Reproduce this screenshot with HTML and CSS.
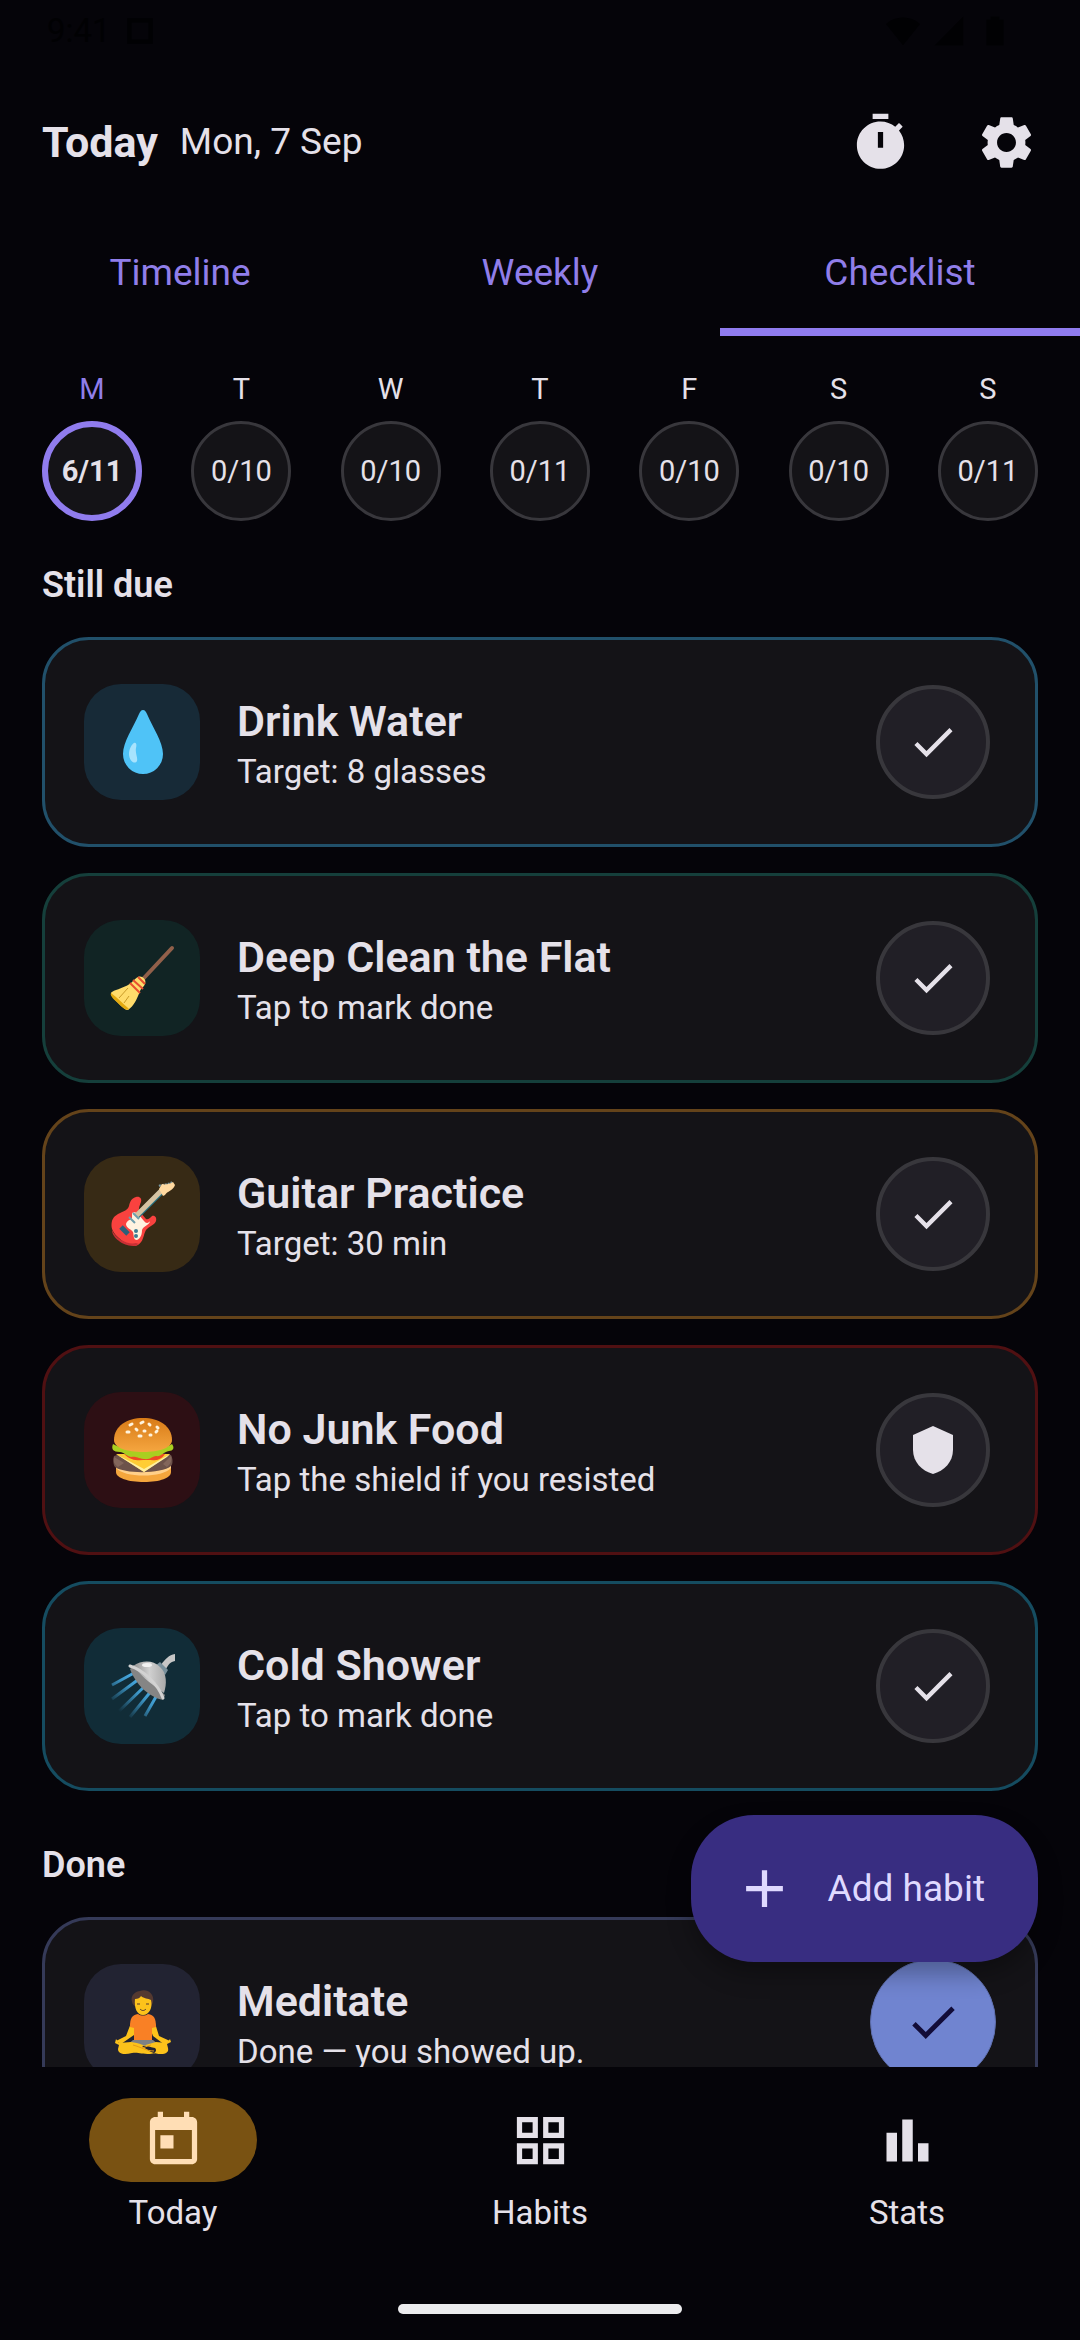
FILE: index.html
```html
<!DOCTYPE html>
<html lang="en">
<head>
    <meta charset="UTF-8">
    <meta name="viewport" content="width=device-width, initial-scale=1">
    <title>Today</title>
    <link rel="stylesheet" href="styles.css">
</head>
<body>
    <!-- Shared icons -->
    <svg class="sprite" aria-hidden="true">
        <symbol id="icon-check" viewBox="0 0 24 24">
            <path d="M9 16.17L4.83 12l-1.42 1.41L9 19 21 7l-1.41-1.41z"/>
        </symbol>
    </svg>

    <div class="status-bar" aria-hidden="true">
        <span class="status-time">9:41</span>
        <svg class="status-icon" viewBox="0 0 24 24"><path d="M3 3h18v18H3zM6 6v12h12V6z" fill-rule="evenodd"/></svg>
        <svg class="status-icon status-wifi" viewBox="0 0 24 24"><path d="M0 7c7-6 17-6 24 0L12 22z"/></svg>
        <svg class="status-icon" viewBox="0 0 24 24"><path d="M2 22h20V2z"/></svg>
        <svg class="status-icon" viewBox="0 0 24 24"><path d="M9 2h6v2h3v18H6V4h3z"/></svg>
    </div>

    <header class="top-bar">
        <h1 class="top-title">Today</h1>
        <span class="top-date">Mon, 7 Sep</span>
        <button class="icon-btn" type="button" aria-label="Timer">
            <svg viewBox="0 0 24 24"><path d="M9 1h6v2H9zM19.03 7.39l1.42-1.42c-.43-.51-.9-.99-1.41-1.41l-1.42 1.42C16.07 4.74 14.12 4 12 4c-4.97 0-9 4.03-9 9s4.02 9 9 9 9-4.03 9-9c0-2.12-.74-4.07-1.97-5.61zM13 14h-2V8h2v6z"/></svg>
        </button>
        <button class="icon-btn" type="button" aria-label="Settings">
            <svg viewBox="0 0 24 24"><path d="M19.14 12.94c.04-.3.06-.61.06-.94 0-.32-.02-.64-.07-.94l2.03-1.58c.18-.14.23-.41.12-.61l-1.92-3.32c-.12-.22-.37-.29-.59-.22l-2.39.96c-.5-.38-1.03-.7-1.62-.94l-.36-2.54c-.04-.24-.24-.41-.48-.41h-3.84c-.24 0-.43.17-.47.41l-.36 2.54c-.59.24-1.13.57-1.62.94l-2.39-.96c-.22-.08-.47 0-.59.22L2.74 8.87c-.12.21-.08.47.12.61l2.03 1.58c-.05.3-.09.63-.09.94s.02.64.07.94l-2.03 1.58c-.18.14-.23.41-.12.61l1.92 3.32c.12.22.37.29.59.22l2.39-.96c.5.38 1.03.7 1.62.94l.36 2.54c.05.24.24.41.48.41h3.84c.24 0 .44-.17.47-.41l.36-2.54c.59-.24 1.13-.56 1.62-.94l2.39.96c.22.08.47 0 .59-.22l1.92-3.32c.12-.22.07-.47-.12-.61l-2.01-1.58zM12 15.6c-1.98 0-3.6-1.62-3.6-3.6s1.62-3.6 3.6-3.6 3.6 1.62 3.6 3.6-1.62 3.6-3.6 3.6z"/></svg>
        </button>
    </header>

    <nav class="tabs" aria-label="Views">
        <a class="tab" href="#timeline">Timeline</a>
        <a class="tab" href="#weekly">Weekly</a>
        <a class="tab active" href="#checklist" aria-current="page">Checklist</a>
    </nav>

    <main class="content">
        <div class="week">
            <button class="day selected" type="button"><span class="day-name">M</span><span class="day-count">6/11</span></button>
            <button class="day" type="button"><span class="day-name">T</span><span class="day-count">0/10</span></button>
            <button class="day" type="button"><span class="day-name">W</span><span class="day-count">0/10</span></button>
            <button class="day" type="button"><span class="day-name">T</span><span class="day-count">0/11</span></button>
            <button class="day" type="button"><span class="day-name">F</span><span class="day-count">0/10</span></button>
            <button class="day" type="button"><span class="day-name">S</span><span class="day-count">0/10</span></button>
            <button class="day" type="button"><span class="day-name">S</span><span class="day-count">0/11</span></button>
        </div>

        <section class="group">
            <h2 class="group-title">Still due</h2>

            <article class="habit water">
                <div class="habit-icon">
                    <svg viewBox="0 0 64 64" aria-hidden="true">
                        <path fill="#4fc3f7" d="M33 0c2 0 3 2 4 4 6 14 16 28 16 40a20 20 0 0 1-40 0c0-12 10-26 16-40 1-2 2-4 4-4z"/>
                        <path fill="#a8e3fd" d="M24 33c2-1 3 1 2 5-1 5 2 10 1 13-2 4-8 0-8-7 0-5 3-10 5-11z"/>
                    </svg>
                </div>
                <div class="habit-text">
                    <h3>Drink Water</h3>
                    <p>Target: 8 glasses</p>
                </div>
                <button class="mark" type="button" aria-label="Mark Drink Water done"><svg><use href="#icon-check"/></svg></button>
            </article>

            <article class="habit clean">
                <div class="habit-icon">
                    <svg viewBox="0 0 64 64" aria-hidden="true">
                        <path stroke="#91604a" stroke-width="4" stroke-linecap="round" d="M33 33L62 2"/>
                        <path fill="#ffdc6b" d="M28 31c4-2 9 3 7 7-1 3-4 4-5 7-3 8-6 15-12 19C15 65 0 50 1 47c1-3 16-5 22-12 2-2 3-3 5-4z"/>
                        <path fill="#e2a90f" d="M1 47c4 3 15 13 18 16-2 2-5 0-9-4S-1 50 1 47z"/>
                        <path fill="none" stroke="#c99b28" d="M9 52l9-10M14 57l5-7"/>
                        <path fill="none" stroke="#e8502f" stroke-width="2" d="M20 37l10 10M23 34l10 9M28 31l7 7"/>
                    </svg>
                </div>
                <div class="habit-text">
                    <h3>Deep Clean the Flat</h3>
                    <p>Tap to mark done</p>
                </div>
                <button class="mark" type="button" aria-label="Mark Deep Clean the Flat done"><svg><use href="#icon-check"/></svg></button>
            </article>

            <article class="habit guitar">
                <div class="habit-icon">
                    <svg viewBox="0 0 64 64" aria-hidden="true">
                        <path fill="none" stroke="#7b9aa3" stroke-width="2" stroke-dasharray="2 1" d="M49 4c4-2 9-1 13-4"/>
                        <path fill="#f9423f" d="M26 15c4-1 6 2 5 5-2 5-3 8-1 10l6 7c2 1 4-1 6-3 3-1 5 2 4 5-1 4-7 5-10 9-3 5-2 12-9 15.500C20 66 2 54 1.500 44c0-6 1.500-9 6.500-12 6-3 10-4 11-8 1-5 3-8 7-9z"/>
                        <path fill="#c92f35" d="M2 48c4 9 16 15 24 13l3 1C20 68 2 58 2 48z"/>
                        <path fill="#fff3e0" d="M22 31c3-2 5 0 7 2l5 6c2 3 5 2 6 0 0 4-7 5-8 9 0 4-1 8-5 10-4 0-3-5-4-8-2-3-7-4-7-8 1-4 5-4 6-6z"/>
                        <path stroke="#247486" stroke-width="6" d="M27 34L54 7"/>
                        <path stroke="#d6c3a2" stroke-width="5" d="M26 34L53 7"/>
                        <path fill="#ffd9a0" d="M49 7l3-5c3 1 8 0 11-2l2 3c-2 6-8 6-10 10l-2 1z"/>
                        <path stroke="#6f9fae" stroke-width="2" d="M19 35l6 6M23 31l6 6"/>
                        <path stroke="#2c6079" stroke-width="5" d="M11 45l7 7"/>
                        <circle cx="26" cy="49" r="2" fill="#3d7d94"/>
                        <circle cx="26" cy="54" r="2" fill="#3d7d94"/>
                    </svg>
                </div>
                <div class="habit-text">
                    <h3>Guitar Practice</h3>
                    <p>Target: 30 min</p>
                </div>
                <button class="mark" type="button" aria-label="Mark Guitar Practice done"><svg><use href="#icon-check"/></svg></button>
            </article>

            <article class="habit food">
                <div class="habit-icon">
                    <svg viewBox="0 0 64 64" aria-hidden="true">
                        <linearGradient id="bun" x2="0" y2="1"><stop stop-color="#d87b17"/><stop offset="1" stop-color="#f5a640"/></linearGradient>
                        <path fill="#f4a63d" d="M6 48h55v6c0 6-11 10-27 10S6 60 6 54z"/>
                        <path fill="#ffd08a" d="M6 47c8 9 47 9 55 0v3c-8 10-47 10-55 0z"/>
                        <path fill="#6d524a" d="M4 38c10-4 48-4 57-1 2 4 2 9 0 11-9 8-47 8-56 1-2-2-2-8-1-11z"/>
                        <path fill="#927568" d="M4 39l10 6-6 4c-4-3-5-6-4-10zM61 38l-8 8 4 3c4-3 5-7 4-11z" opacity=".6"/>
                        <path fill="#ffcd35" d="M6 36h54L34 54z"/>
                        <path fill="#fff0a0" d="M9 38l25 16 23-15 3-3-26 15L6 36z"/>
                        <path fill="#ef4a24" d="M14 36h41c-5 8-12 6-18 6-8 0-15 2-23-6z"/>
                        <path fill="#a9cf20" d="M3 26c15 8 45 8 59 0 3 4 1 7-3 7-6 1-8 6-13 5-3 0-6 4-12 3-7-1-8-3-13-2-5-1-7-5-11-5-7 0-9-3-7-8z"/>
                        <path fill="url(#bun)" d="M4 22C4 8 17 0 33 0s29 8 29 22c0 8-13 12-29 12S4 30 4 22z"/>
                        <path stroke="#fff3dc" stroke-width="3" stroke-linecap="round" d="M20 7l2-1M31 5l2-1M39 6l1 1M47 9l1 1M26 11l1 1M34 13h1M17 14h2M29 18h2M40 17h1M46 14l1-1"/>
                    </svg>
                </div>
                <div class="habit-text">
                    <h3>No Junk Food</h3>
                    <p>Tap the shield if you resisted</p>
                </div>
                <button class="mark" type="button" aria-label="I resisted No Junk Food"><svg viewBox="0 0 52 52"><path d="M26 2L6 11v15c0 12 9 21 20 24 11-3 20-12 20-24V11z"/></svg></button>
            </article>

            <article class="habit shower">
                <div class="habit-icon">
                    <svg viewBox="0 0 64 64" aria-hidden="true">
                        <linearGradient id="jet" gradientUnits="userSpaceOnUse" x1="40" y1="28" x2="12" y2="60"><stop stop-color="#4db6f5"/><stop offset=".4" stop-color="#3c94c4"/><stop offset="1" stop-color="#3c94c4" stop-opacity="0"/></linearGradient>
                        <linearGradient id="dome"><stop stop-color="#8f8f8f"/><stop offset=".5" stop-color="#d0d0d0"/><stop offset="1" stop-color="#a9a9a9"/></linearGradient>
                        <path fill="none" stroke="url(#jet)" stroke-width="3" d="M24 19L2 31M29 25L2 45M36 31L3 63M42 36L20 63M47 41L35 62"/>
                        <path fill="#c6c6c6" d="M51 11c4-6 8-10 14-11v7c-5 1-6 3-9 8z"/>
                        <path fill="#78909c" d="M50 8l8 8-3 5-10-9z"/>
                        <path fill="#858585" d="M20 15c5 14 18 28 33 31l2-5L24 11z"/>
                        <path fill="url(#dome)" d="M23 12c9-6 20-6 27 1 7 6 7 17 4 26-10-7-20-14-31-27z"/>
                        <path fill="none" stroke="#d2d2d2" stroke-width="3" stroke-linecap="round" d="M20 12c13 4 28 18 33 32"/>
                        <ellipse cx="37" cy="11" rx="5" ry="2" fill="#f1f1f1"/>
                    </svg>
                </div>
                <div class="habit-text">
                    <h3>Cold Shower</h3>
                    <p>Tap to mark done</p>
                </div>
                <button class="mark" type="button" aria-label="Mark Cold Shower done"><svg><use href="#icon-check"/></svg></button>
            </article>
        </section>

        <section class="group group-done">
            <h2 class="group-title">Done</h2>

            <article class="habit meditate">
                <div class="habit-icon">
                    <svg viewBox="0 0 64 64" aria-hidden="true">
                        <path fill="#543930" d="M22 12C20 5 26 1 30 1c6-3 15 2 13 11-1 4-4 6-10 6s-10-2-11-6z"/>
                        <path fill="#fcc21b" d="M25 9c3 0 5-1 6-3 3 3 7 2 10 4 2 8-2 15-8 15s-9-7-8-16z"/>
                        <path fill="#fcc21b" d="M21 33h7l-4 12-13 9-5-3 10-5zM38 33h7l4 13 11 5-5 4-12-9z"/>
                        <path fill="#f98025" d="M28 24c3 2 7 2 10 0 6 1 8 4 8 13l-4 1v13H24V38l-4-1c0-9 2-12 8-13z"/>
                        <path fill="#7e8185" d="M23 50h20l7 6H16z"/>
                        <path fill="#fcc21b" d="M6 49l3 4 12-1c8 1 14 4 24 6 3 3-1 6-5 6-9 0-12-2-18-1-8 2-14 1-14-4l1-4-4-2zM60 49l-3 4-11-1-14 4c8 6 12 8 19 8 5 0 8-2 7-6l-1-4 4-2z"/>
                        <path fill="none" stroke="#e39a18" stroke-width="1" d="M23 55c8 2 13 6 21 6M32 58l9-3"/>
                        <path fill="none" stroke="#543930" stroke-width="1" d="M27 14h3M36 14h3M30 19c2 2 4 2 6 0"/>
                    </svg>
                </div>
                <div class="habit-text">
                    <h3>Meditate</h3>
                    <p>Done — you showed up.</p>
                </div>
                <button class="mark checked" type="button" aria-label="Meditate is done"><svg><use href="#icon-check"/></svg></button>
            </article>
        </section>
    </main>

    <div class="bottom">
        <button class="fab" type="button">
            <svg viewBox="0 0 24 24" aria-hidden="true"><path d="M19 13h-6v6h-2v-6H5v-2h6V5h2v6h6z"/></svg>
            Add habit
        </button>

        <nav class="bottom-nav" aria-label="Main">
            <a class="nav-item active" href="#today" aria-current="page">
                <span class="nav-pill"><svg viewBox="0 0 24 24" aria-hidden="true"><path d="M19 3h-1V1h-2v2H8V1H6v2H5c-1.110 0-1.990.9-1.990 2L3 19c0 1.100.89 2 2 2h14c1.100 0 2-.9 2-2V5c0-1.100-.9-2-2-2zm0 16H5V8h14v11zM7 10h5v5H7z"/></svg></span>
                Today
            </a>
            <a class="nav-item" href="#habits">
                <span class="nav-pill"><svg viewBox="0 0 24 24" aria-hidden="true"><path d="M3 3v8h8V3H3zm6 6H5V5h4v4zm-6 4v8h8v-8H3zm6 6H5v-4h4v4zm4-16v8h8V3h-8zm6 6h-4V5h4v4zm-6 4v8h8v-8h-8zm6 6h-4v-4h4v4z"/></svg></span>
                Habits
            </a>
            <a class="nav-item" href="#stats">
                <span class="nav-pill"><svg viewBox="0 0 24 24" aria-hidden="true"><path d="M4 9h4v11H4zM16 13h4v7h-4zM10 4h4v16h-4z"/></svg></span>
                Stats
            </a>
        </nav>
        <div class="home-bar"></div>
    </div>
</body>
</html>
```

FILE: styles.css
```css
* {
    box-sizing: border-box;
}
body {
    margin: 0;
    height: 100vh;
    display: flex;
    flex-direction: column;
    background-color: #050409;
    color: #e5e1e9;
    font-family: Roboto, "Noto Sans", sans-serif;
    font-size: 33px;
    line-height: 42px;
}
h1, h2, h3, p {
    margin: 0;
}
button {
    font: inherit;
    color: inherit;
    background: none;
    border: none;
    padding: 0;
    cursor: pointer;
}
a {
    color: inherit;
    text-decoration: none;
}
svg {
    fill: currentColor;
}
.sprite {
    display: none;
}

/* Status bar */
.status-bar {
    display: flex;
    align-items: center;
    gap: 12px;
    height: 74px;
    padding: 0 68px 12px 47px;
    color: #010103;
}
.status-icon {
    width: 34px;
    height: 34px;
}
.status-wifi {
    margin-left: auto;
}

/* Top bar */
.top-bar {
    display: flex;
    align-items: center;
    height: 136px;
    padding: 0 11px 0 42px;
}
.top-title {
    font-size: 43px;
    font-weight: 700;
}
.top-date {
    flex: 1;
    margin-left: 22px;
    font-size: 37px;
}
.icon-btn {
    width: 126px;
    height: 126px;
    display: grid;
    place-items: center;
}
.icon-btn svg {
    width: 63px;
    height: 63px;
}

/* Tabs */
.tabs {
    display: grid;
    grid-template-columns: repeat(3, 1fr);
    height: 126px;
}
.tab {
    display: grid;
    place-items: center;
    padding-top: 8px;
    border-bottom: 8px solid transparent;
    color: #907ee9;
    font-size: 37px;
}
.tab.active {
    border-color: #907cee;
}

/* Scrolling list */
.content {
    flex: 1;
    min-height: 0;
    overflow-y: auto;
    scrollbar-width: none;
    padding: 32px 42px 0;
}
.week {
    display: flex;
    justify-content: space-between;
    margin-bottom: 38px;
}
.day {
    display: flex;
    flex-direction: column;
    align-items: center;
    gap: 11px;
    font-size: 29px;
}
.day-count {
    display: grid;
    place-items: center;
    width: 100px;
    height: 100px;
    border: 3px solid #38373c;
    border-radius: 50%;
    background-color: #141317;
}
.day.selected .day-name {
    color: #907ee9;
}
.day.selected .day-count {
    border: 6px solid #907cee;
    font-weight: 700;
}
.group {
    display: flex;
    flex-direction: column;
    gap: 26px;
}
.group-done {
    margin-top: 48px;
}
.group-title {
    font-size: 36px;
    font-weight: 600;
    line-height: 52px;
}

/* Habit cards */
.habit {
    display: flex;
    align-items: center;
    gap: 37px;
    height: 210px;
    padding: 0 39px;
    border: 3px solid;
    border-radius: 47px;
    background-color: #141317;
}
.habit-icon {
    display: grid;
    place-items: center;
    width: 116px;
    height: 116px;
    border-radius: 37px;
}
.habit-icon svg {
    width: 64px;
    height: 64px;
    overflow: visible;
}
.habit-text {
    flex: 1;
}
.habit-text h3 {
    font-size: 43px;
    font-weight: 600;
    line-height: 60px;
}
.mark {
    display: grid;
    place-items: center;
    width: 114px;
    height: 114px;
    margin: 0 6px;
    border: 4px solid #38373c;
    border-radius: 50%;
    background-color: #211f26;
}
.mark svg {
    width: 52px;
    height: 52px;
}
.mark.checked {
    width: 126px;
    height: 126px;
    margin: 0;
    border: 1px solid #5f6fae;
    background-color: #7084d0;
    color: #120c38;
}
.mark.checked svg {
    width: 58px;
    height: 58px;
}

.water { border-color: #21506a; }
.water .habit-icon { background-color: #172a37; }
.clean { border-color: #153f3b; }
.clean .habit-icon { background-color: #112424; }
.guitar { border-color: #64431a; }
.guitar .habit-icon { background-color: #372a15; }
.food { border-color: #501012; }
.food .habit-icon { background-color: #2d0f14; }
.shower { border-color: #154c60; }
.shower .habit-icon { background-color: #112c37; }
.meditate { border-color: #353a58; }
.meditate .habit-icon { background-color: #222332; }

/* Bottom area */
.bottom {
    position: relative;
    padding: 31px 0 26px;
}
.fab {
    position: absolute;
    right: 42px;
    bottom: 100%;
    display: flex;
    align-items: center;
    gap: 32px;
    height: 147px;
    margin-bottom: 105px;
    padding: 0 53px 0 42px;
    border-radius: 63px;
    background-color: #382d81;
    box-shadow: 0 12px 24px rgba(0, 0, 0, 0.3);
    color: #dfd9ff;
    font-size: 37px;
}
.fab svg {
    width: 63px;
    height: 63px;
}
.bottom-nav {
    display: grid;
    grid-template-columns: repeat(3, 1fr);
    gap: 21px;
}
.nav-item {
    display: flex;
    flex-direction: column;
    align-items: center;
    gap: 10px;
}
.nav-pill {
    display: grid;
    place-items: center;
    width: 168px;
    height: 84px;
    border-radius: 42px;
}
.nav-pill svg {
    width: 63px;
    height: 63px;
}
.nav-item.active .nav-pill {
    background-color: #795212;
    color: #ffdeb5;
}
.home-bar {
    width: 284px;
    height: 10px;
    margin: 70px auto 0;
    border-radius: 5px;
    background-color: #ececee;
}
```
